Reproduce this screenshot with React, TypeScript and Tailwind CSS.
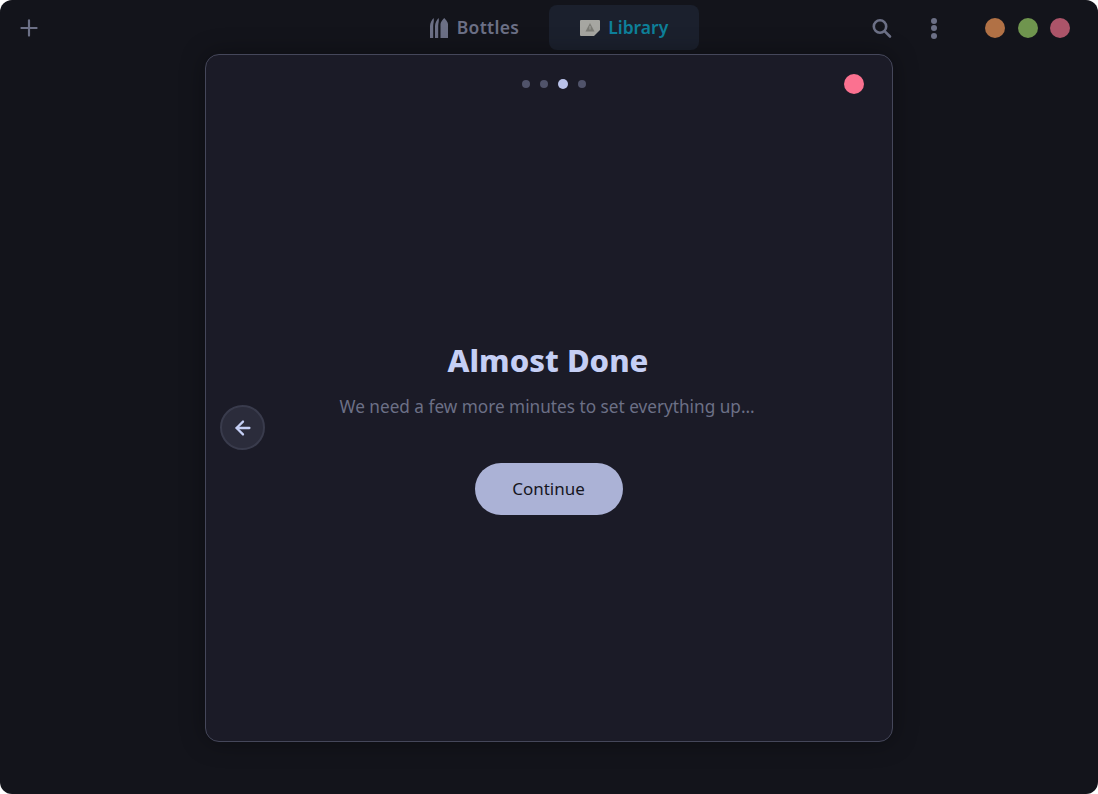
import { Plus, ArrowLeft } from 'lucide-react';

function BottlesIcon() {
    return (
        <svg width="18" height="20" viewBox="0 0 18 20" fill="#6c7086">
            <path d="M0 20V8C0 5 2 1.5 3.6 0C4.4 3 3.2 5 3.2 8V20Z" />
            <path d="M5 20V8C5 5 7 1.5 8.6 0C9.4 3 8.2 5 8.2 8V20Z" />
            <path d="M10.5 20V6C10.5 4 13 1.5 14.2 0C15.5 1.5 18 4 18 6V20Z" />
        </svg>
    );
}

function LibraryIcon() {
    return (
        <svg width="20" height="17" viewBox="0 0 20 17">
            <path d="M1 1H19Q20 1 20 2V11L14 17H1Q0 17 0 16V2Q0 1 1 1Z" fill="#a6a6a1" />
            <path d="M10 4L14.5 12.5H5.5Z" fill="#7b7b75" />
            <path d="M9.5 7H10.5V10.5H9.5Z" fill="#a6a6a1" />
        </svg>
    );
}

function SearchIcon() {
    return (
        <svg width="22" height="22" viewBox="0 0 22 22" fill="none" stroke="#6c7086" strokeWidth="2.6">
            <circle cx="10" cy="9.5" r="6.2" />
            <path d="M14.8 14.3L20 19.5" strokeLinecap="round" />
        </svg>
    );
}

function Dot({ active }: { active?: boolean }) {
    return active ? (
        <span className="w-[10px] h-[10px] rounded-full bg-[#bac2ea]" />
    ) : (
        <span className="w-2 h-2 rounded-full bg-[#50536a]" />
    );
}

export default function App() {
    return (
        <div className="w-[1098px] h-[794px] bg-[#13141b] rounded-[12px] overflow-hidden flex flex-col font-['Noto_Sans',sans-serif]">
            <header className="h-[54px] shrink-0 relative flex items-center justify-center pl-[31px]">
                <button className="absolute left-[16px] top-[15px] text-[#6c7086]">
                    <Plus size={26} strokeWidth={2} />
                </button>
                <div className="flex items-center gap-[30px] mt-[1px]">
                    <div className="flex items-center gap-[9px] text-[#6c7086] text-[17.5px] font-semibold tracking-[0.3px]">
                        <BottlesIcon />
                        <span>Bottles</span>
                    </div>
                    <div className="w-[150px] h-[45px] rounded-lg bg-[#1b202d] flex items-center justify-center gap-2 text-[#0e809a] text-[17.5px] font-semibold">
                        <LibraryIcon />
                        <span>Library</span>
                    </div>
                </div>
                <div className="absolute left-[870px] top-[15px] h-[26px] flex items-center gap-[39px]">
                    <SearchIcon />
                    <div className="flex flex-col gap-[1.5px]">
                        <span className="w-[6px] h-[6px] rounded-full bg-[#6c7086]" />
                        <span className="w-[6px] h-[6px] rounded-full bg-[#6c7086]" />
                        <span className="w-[6px] h-[6px] rounded-full bg-[#6c7086]" />
                    </div>
                </div>
                <div className="absolute left-[985px] top-[18px] flex gap-[12.5px]">
                    <span className="w-5 h-5 rounded-full bg-[#b17145]" />
                    <span className="w-5 h-5 rounded-full bg-[#6f954e]" />
                    <span className="w-5 h-5 rounded-full bg-[#ac5469]" />
                </div>
            </header>
            <div className="flex justify-center">
                <div className="relative w-[688px] h-[688px] rounded-[14px] border border-[#45475a] bg-[#1b1b27] shadow-[0_0_24px_rgba(0,0,0,0.35)] flex flex-col items-center">
                    <div className="flex items-center gap-[10px] h-[20px] mt-[19px] ml-[10px]">
                        <Dot />
                        <Dot />
                        <Dot active />
                        <Dot />
                    </div>
                    <span className="absolute right-[28px] top-[19px] w-5 h-5 rounded-full bg-[#fb7190]" />
                    <h1 className="mt-[246px] text-[31px] leading-[40px] font-extrabold text-[#c5cff5] mr-[2px]">Almost Done</h1>
                    <p className="mt-[15px] text-[17.2px] leading-[24px] text-[#6c7086] -ml-[4px]">We need a few more minutes to set everything up…</p>
                    <button className="mt-[44px] w-[148px] h-[52px] rounded-full bg-[#abb2d6] text-[#16161f] text-[17px] mr-[1px]">Continue</button>
                    <button className="absolute left-[14px] top-[350px] w-[45px] h-[45px] rounded-full bg-[#2b2c3b] border-2 border-[#393b4c] flex items-center justify-center text-[#c5cff5]">
                        <ArrowLeft size={22} strokeWidth={2.5} className="ml-[1px]" />
                    </button>
                </div>
            </div>
        </div>
    );
}
